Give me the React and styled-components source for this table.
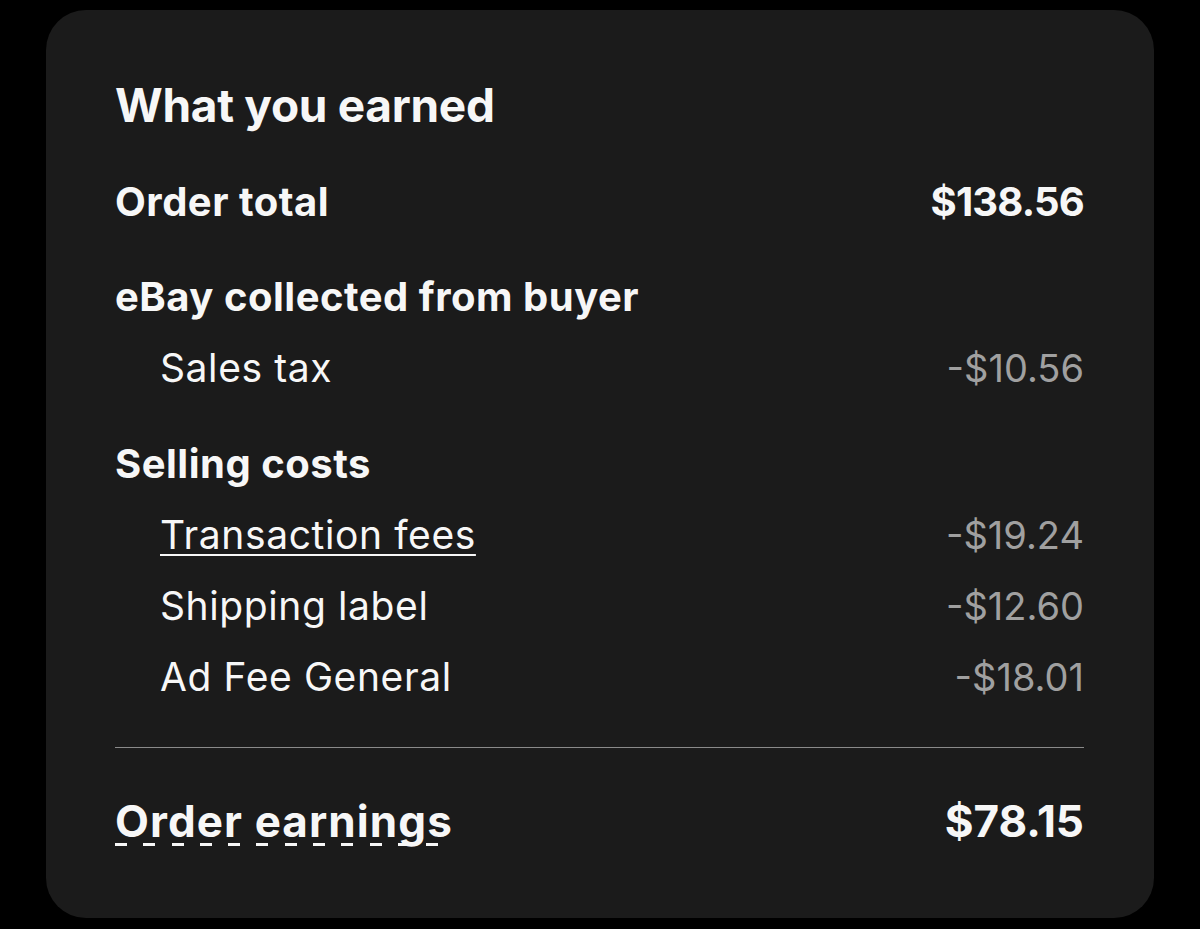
import React from 'react';
import styled, { createGlobalStyle } from 'styled-components';

const GlobalStyle = createGlobalStyle`
  html, body {
    margin: 0;
    padding: 0;
    background: #000;
  }
  body {
    font-family: Inter, "Noto Sans", sans-serif;
    color: #f7f7f7;
  }
`;

const Page = styled.div`
  width: 1200px;
  height: 929px;
  padding: 10px 46px 11px 46px;
  box-sizing: border-box;
  background: #000;
`;

const Card = styled.div`
  height: 100%;
  box-sizing: border-box;
  background: #1b1b1b;
  border-radius: 40px;
  padding: 72px 70px 0 69px;
  display: flex;
  flex-direction: column;
`;

const Title = styled.h2`
  margin: 0 0 38px 0;
  font-size: 46px;
  font-weight: 700;
  letter-spacing: -0.3px;
  line-height: 46px;
`;

const Group = styled.div`
  display: flex;
  flex-direction: column;
  margin-top: ${p => p.gap || 0}px;
`;

const Row = styled.div`
  display: flex;
  justify-content: space-between;
  align-items: center;
  height: 71px;
`;

const Label = styled.span`
  font-size: ${p => (p.bold ? 40 : 39)}px;
  font-weight: ${p => (p.bold ? 700 : 400)};
  letter-spacing: ${p => (p.bold ? 0.5 : 0.6)}px;
  padding-left: ${p => (p.indent ? 45 : 0)}px;
`;

const Linked = styled.span`
  text-decoration: underline;
  text-decoration-thickness: 2px;
  text-underline-offset: 5px;
`;

const Amount = styled.span`
  font-size: ${p => (p.bold ? 40 : 38)}px;
  font-weight: ${p => (p.bold ? 700 : 400)};
  color: ${p => (p.muted ? '#a0a0a0' : '#f7f7f7')};
  letter-spacing: ${p => (p.bold ? -0.8 : 0)}px;
`;

const Divider = styled.hr`
  border: none;
  border-top: 1px solid #8a8a8a;
  margin: 35px 0 37px 0;
`;

const TotalLabel = styled.span`
  font-size: 44px;
  font-weight: 700;
  letter-spacing: 1.1px;
  background-image: repeating-linear-gradient(
    to right,
    #f7f7f7 0,
    #f7f7f7 12px,
    transparent 12px,
    transparent 28.3px
  );
  background-size: 328px 3px;
  background-repeat: no-repeat;
  background-position: 0 calc(100% - 2px);
`;

const TotalAmount = styled.span`
  font-size: 44px;
  font-weight: 700;
`;

const sections = [
  {
    heading: 'eBay collected from buyer',
    items: [{ label: 'Sales tax', amount: '-$10.56' }],
  },
  {
    heading: 'Selling costs',
    items: [
      { label: 'Transaction fees', amount: '-$19.24', link: true },
      { label: 'Shipping label', amount: '-$12.60' },
      { label: 'Ad Fee General', amount: '-$18.01' },
    ],
  },
];

export default function App() {
  return (
    <Page>
      <GlobalStyle />
      <Card>
        <Title>What you earned</Title>
        <Row>
          <Label bold>Order total</Label>
          <Amount bold>$138.56</Amount>
        </Row>
        {sections.map((s, i) => (
          <Group key={s.heading} gap={i === 0 ? 24 : 25}>
            <Row>
              <Label bold>{s.heading}</Label>
            </Row>
            {s.items.map(it => (
              <Row key={it.label}>
                <Label indent>{it.link ? <Linked>{it.label}</Linked> : it.label}</Label>
                <Amount muted>{it.amount}</Amount>
              </Row>
            ))}
          </Group>
        ))}
        <Divider />
        <Row>
          <TotalLabel>Order earnings</TotalLabel>
          <TotalAmount>$78.15</TotalAmount>
        </Row>
      </Card>
    </Page>
  );
}
